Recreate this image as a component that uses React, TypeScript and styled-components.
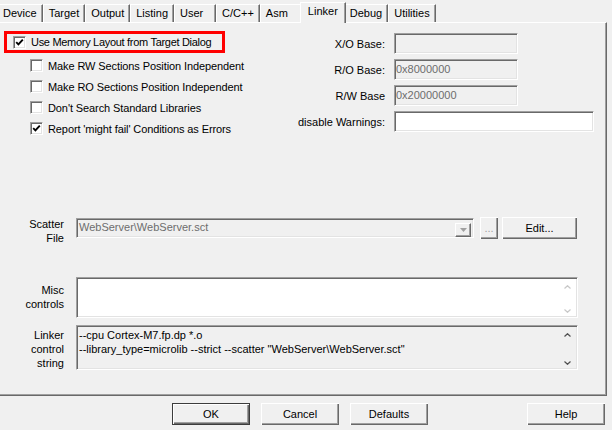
import React from 'react';
import styled, { createGlobalStyle } from 'styled-components';

const GlobalStyle = createGlobalStyle`
  html, body {
    margin: 0;
    padding: 0;
    background: #f0f0f0;
  }
  body {
    font-family: "Liberation Sans", Arial, sans-serif;
    font-size: 11px;
    color: #000;
  }
  #root {
    width: 612px;
    height: 430px;
    overflow: hidden;
  }
`;

const Dialog = styled.div`
  width: 612px;
  height: 430px;
  display: flex;
  flex-direction: column;
  background: #f0f0f0;
  overflow: hidden;
`;

const TabStrip = styled.div`
  display: flex;
  align-items: flex-end;
  height: 22px;
  flex-shrink: 0;
  margin-left: -3px;
  position: relative;
  z-index: 1;
`;

const Tab = styled.div<{ $active?: boolean }>`
  box-sizing: border-box;
  min-width: 42px;
  height: ${p => (p.$active ? '21px' : '18px')};
  margin: ${p => (p.$active ? '0 -2px -1px' : '0')};
  padding: ${p => (p.$active ? '0 7px' : '0 5px')};
  border-top: 1px solid #fff;
  border-left: 1px solid #fff;
  border-right: 1px solid #696969;
  box-shadow: inset -1px 0 #a0a0a0;
  background: #f0f0f0;
  line-height: ${p => (p.$active ? '16px' : '17px')};
  white-space: nowrap;
  position: relative;
  z-index: ${p => (p.$active ? 2 : 1)};
`;

const Panel = styled.div`
  box-sizing: border-box;
  width: 607px;
  height: 374px;
  flex-shrink: 0;
  border-top: 1px solid #fff;
  border-right: 1px solid #696969;
  border-bottom: 1px solid #696969;
  box-shadow: inset -1px -1px #a0a0a0;
  display: flex;
  flex-direction: column;
`;

const TopSection = styled.div`
  display: flex;
  height: 116px;
  flex-shrink: 0;
`;

const OptionsColumn = styled.div`
  box-sizing: border-box;
  width: 297px;
  padding: 8px 0 0 4px;
`;

const Highlight = styled.div`
  box-sizing: border-box;
  display: flex;
  align-items: center;
  gap: 5px;
  width: 221px;
  height: 22px;
  border: 3px solid #ff0000;
  padding-left: 6px;
  white-space: nowrap;
  letter-spacing: -0.3px;
`;

const OptionList = styled.div`
  display: flex;
  flex-direction: column;
  margin-top: 2px;
  padding-left: 26px;
`;

const Option = styled.label`
  display: flex;
  align-items: center;
  gap: 5px;
  height: 21px;
  white-space: nowrap;
  letter-spacing: -0.1px;
`;

const Box = styled.span`
  box-sizing: border-box;
  display: inline-flex;
  align-items: center;
  justify-content: center;
  width: 13px;
  height: 13px;
  flex-shrink: 0;
  background: #fff;
  border-top: 1px solid #a0a0a0;
  border-left: 1px solid #a0a0a0;
  border-bottom: 1px solid #fff;
  border-right: 1px solid #fff;
  box-shadow: inset 1px 1px #696969, inset -1px -1px #e3e3e3;
`;

const BaseGrid = styled.div`
  padding-top: 10px;
  display: grid;
  grid-template-columns: 88px auto;
  column-gap: 9px;
  row-gap: 5px;
  align-content: start;
  align-items: center;
`;

const FieldLabel = styled.div`
  text-align: right;
  white-space: nowrap;
`;

const Field = styled.div<{ $width: number; $white?: boolean }>`
  box-sizing: border-box;
  width: ${p => p.$width}px;
  height: 21px;
  padding: 2px 1px;
  line-height: 15px;
  color: #6d6d6d;
  background: ${p => (p.$white ? '#fff' : '#f0f0f0')};
  border-top: 1px solid #a0a0a0;
  border-left: 1px solid #a0a0a0;
  border-bottom: 1px solid #fff;
  border-right: 1px solid #fff;
  box-shadow: inset 1px 1px #696969, inset -1px -1px #e3e3e3;
  white-space: nowrap;
  overflow: hidden;
`;

const FormRow = styled.div<{ $top: number }>`
  display: grid;
  grid-template-columns: 64px auto;
  column-gap: 12px;
  align-items: start;
  margin-top: ${p => p.$top}px;
`;

const RowLabel = styled.div<{ $pad: number }>`
  text-align: right;
  line-height: 14px;
  padding-top: ${p => p.$pad}px;
`;

const ScatterControls = styled.div`
  display: flex;
  align-items: flex-start;
`;

const Combo = styled(Field)`
  height: 20px;
  margin-top: 1px;
  padding: 1px 2px 1px 1px;
  display: flex;
  align-items: flex-start;
`;

const ComboText = styled.span`
  flex: 1;
  padding-left: 1px;
`;

const DropButton = styled.span`
  box-sizing: border-box;
  align-self: flex-end;
  display: flex;
  align-items: center;
  justify-content: center;
  width: 16px;
  height: 14px;
  margin-bottom: -1px;
  background: #f0f0f0;
  border-top: 1px solid #fff;
  border-left: 1px solid #fff;
  border-right: 1px solid #696969;
  border-bottom: 1px solid #696969;
  box-shadow: inset -1px -1px #a0a0a0;
`;

const Button = styled.button<{ $width: number; $default?: boolean; $muted?: boolean }>`
  box-sizing: border-box;
  width: ${p => p.$width}px;
  height: 22px;
  flex-shrink: 0;
  padding: 0;
  font-family: inherit;
  font-size: 11px;
  color: ${p => (p.$muted ? '#a0a0a0' : '#000')};
  background: #f0f0f0;
  border: ${p => (p.$default ? '1px solid #3c3c3c' : 'none')};
  box-shadow: inset 1px 1px #fff, inset -1px -1px #696969, inset -2px -2px #a0a0a0;
`;

const TextBox = styled.div<{ $height: number; $white?: boolean }>`
  box-sizing: border-box;
  display: flex;
  width: 502px;
  height: ${p => p.$height}px;
  background: ${p => (p.$white ? '#fff' : '#f0f0f0')};
  border-top: 1px solid #a0a0a0;
  border-left: 1px solid #a0a0a0;
  border-bottom: 1px solid #fff;
  border-right: 1px solid #fff;
  box-shadow: inset 1px 1px #696969, inset -1px -1px #e3e3e3;
  padding: 1px;
`;

const TextContent = styled.div`
  flex: 1;
  padding: 1px 1px 0;
  line-height: 14px;
  white-space: pre;
  overflow: hidden;
`;

const ScrollBar = styled.div`
  width: 17px;
  display: flex;
  flex-direction: column;
  justify-content: space-between;
  align-items: center;
  padding: 6px 0 3px;
  box-sizing: border-box;
`;

const ButtonBar = styled.div`
  flex: 1;
  display: flex;
  align-items: flex-start;
  gap: 11px;
  padding: 7px 7px 0 172px;
`;

const HelpButton = styled(Button)`
  margin-left: auto;
`;

const Check = ({ checked }: { checked?: boolean }) => (
  <Box>
    {checked && (
      <svg width="9" height="9" viewBox="0 0 9 9">
        <path d="M1.2 4.2 L3.4 6.4 L7.8 1.6" fill="none" stroke="#000" strokeWidth="1.9" />
      </svg>
    )}
  </Box>
);

const Arrow = ({ up, color }: { up?: boolean; color: string }) => (
  <svg width="7" height="4" viewBox="0 0 7 4">
    <polyline
      points={up ? '0.5,3.5 3.5,0.7 6.5,3.5' : '0.5,0.5 3.5,3.3 6.5,0.5'}
      fill="none"
      stroke={color}
      strokeWidth="1.2"
    />
  </svg>
);

const tabs = ['Device', 'Target', 'Output', 'Listing', 'User', 'C/C++', 'Asm', 'Linker', 'Debug', 'Utilities'];

const options = [
  { label: 'Make RW Sections Position Independent', checked: false },
  { label: 'Make RO Sections Position Independent', checked: false },
  { label: "Don't Search Standard Libraries", checked: false },
  { label: "Report 'might fail' Conditions as Errors", checked: true },
];

export default function App() {
  return (
    <>
      <GlobalStyle />
      <Dialog>
        <TabStrip>
          {tabs.map(t => (
            <Tab key={t} $active={t === 'Linker'}>
              {t}
            </Tab>
          ))}
        </TabStrip>

        <Panel>
          <TopSection>
            <OptionsColumn>
              <Highlight>
                <Check checked />
                <span>Use Memory Layout from Target Dialog</span>
              </Highlight>
              <OptionList>
                {options.map(o => (
                  <Option key={o.label}>
                    <Check checked={o.checked} />
                    <span>{o.label}</span>
                  </Option>
                ))}
              </OptionList>
            </OptionsColumn>

            <BaseGrid>
              <FieldLabel>X/O Base:</FieldLabel>
              <Field $width={124} />
              <FieldLabel>R/O Base:</FieldLabel>
              <Field $width={124}>0x8000000</Field>
              <FieldLabel>R/W Base</FieldLabel>
              <Field $width={124}>0x20000000</Field>
              <FieldLabel>disable Warnings:</FieldLabel>
              <Field $width={200} $white />
            </BaseGrid>
          </TopSection>

          <FormRow $top={78}>
            <RowLabel $pad={0}>
              Scatter
              <br />
              File
            </RowLabel>
            <ScatterControls>
              <Combo $width={398}>
                <ComboText>{'WebServer\\WebServer.sct'}</ComboText>
                <DropButton>
                  <svg width="7" height="4" viewBox="0 0 7 4">
                    <path d="M0 0 H7 L3.5 4 Z" fill="#a0a0a0" />
                  </svg>
                </DropButton>
              </Combo>
              <Button $width={18} $muted style={{ marginLeft: 6 }}>
                ...
              </Button>
              <Button $width={75} style={{ marginLeft: 4 }}>
                Edit...
              </Button>
            </ScatterControls>
          </FormRow>

          <FormRow $top={32}>
            <RowLabel $pad={6}>
              Misc
              <br />
              controls
            </RowLabel>
            <TextBox $height={41} $white>
              <TextContent />
              <ScrollBar>
                <Arrow up color="#c8c8c8" />
                <Arrow color="#c8c8c8" />
              </ScrollBar>
            </TextBox>
          </FormRow>

          <FormRow $top={7}>
            <RowLabel $pad={3}>
              Linker
              <br />
              control
              <br />
              string
            </RowLabel>
            <TextBox $height={45}>
              <TextContent>
                {'--cpu Cortex-M7.fp.dp *.o\n--library_type=microlib --strict --scatter "WebServer\\WebServer.sct"'}
              </TextContent>
              <ScrollBar>
                <Arrow up color="#505050" />
                <Arrow color="#505050" />
              </ScrollBar>
            </TextBox>
          </FormRow>
        </Panel>

        <ButtonBar>
          <Button $width={78} $default>
            OK
          </Button>
          <Button $width={78}>Cancel</Button>
          <Button $width={78}>Defaults</Button>
          <HelpButton $width={78}>Help</HelpButton>
        </ButtonBar>
      </Dialog>
    </>
  );
}
